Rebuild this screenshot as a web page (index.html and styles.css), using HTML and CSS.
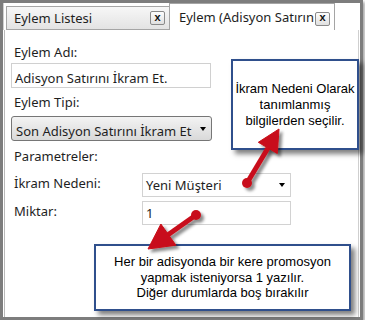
FILE: index.html
```html
<!DOCTYPE html>
<html>
<head>
<title>Eylem</title>
<meta charset="UTF-8">
<link rel="stylesheet" href="styles.css">
</head>
<body>

<div class="frame">
    <!-- sekmeler -->
    <div class="tabs">
        <div class="tab tab-idle">
            <span class="tab-title">Eylem Listesi</span>
            <span class="close">x</span>
        </div>
        <div class="tab tab-active">
            <span class="tab-title">Eylem (Adisyon Satırın</span>
            <span class="close">x</span>
        </div>
    </div>

    <!-- form -->
    <div class="panel">
        <div class="lbl lbl-name">Eylem Adı:</div>
        <div class="textbox">Adisyon Satırını İkram Et.</div>
        <div class="lbl lbl-type">Eylem Tipi:</div>
        <div class="combo">
            <span class="combo-text">Son Adisyon Satırını İkram Et</span>
            <span class="caret"></span>
        </div>
        <div class="lbl lbl-params">Parametreler:</div>
        <div class="row row-first">
            <div class="lbl row-lbl">İkram Nedeni:</div>
            <div class="pbox pcombo">
                <span>Yeni Müşteri</span>
                <span class="caret"></span>
            </div>
        </div>
        <div class="row row-second">
            <div class="lbl row-lbl">Miktar:</div>
            <div class="pbox">1</div>
        </div>
    </div>

    <!-- açıklama kutuları -->
    <div class="callout callout-top">İkram Nedeni Olarak<br>tanımlanmış<br>bilgilerden seçilir.</div>
    <div class="callout callout-bottom">Her bir adisyonda bir kere promosyon<br>yapmak isteniyorsa 1 yazılır.<br>Diğer durumlarda boş bırakılır</div>

    <!-- oklar -->
    <svg class="arrows" width="365" height="323" viewBox="0 0 365 323">
        <defs>
            <filter id="shade" x="-20%" y="-20%" width="160%" height="160%">
                <feDropShadow dx="3" dy="3" stdDeviation="1.5" flood-color="#000" flood-opacity="0.45"/>
            </filter>
        </defs>
        <g fill="#c8101a" stroke="#c8101a" filter="url(#shade)">
            <line x1="247" y1="183" x2="268" y2="148" stroke-width="5"/>
            <polygon points="279,129 277.3,153.5 258.3,142.3" stroke-width="1"/>
            <circle cx="247" cy="183" r="5" stroke="none"/>
        </g>
        <g fill="#c8101a" stroke="#c8101a" filter="url(#shade)">
            <line x1="196" y1="215" x2="167" y2="235.5" stroke-width="5"/>
            <polygon points="148,249 175.9,245.2 160.9,224" stroke-width="1"/>
            <circle cx="196" cy="215" r="5" stroke="none"/>
        </g>
    </svg>
</div>

</body>
</html>
```

FILE: styles.css
```css
body {
    margin: 0;
    background: #fff;
    font-family: "Noto Sans", sans-serif;
    font-size: 13px;
    color: #1e1e1e;
}

/* dış çerçeve */
.frame {
    position: relative;
    width: 363px;
    height: 320px;
    box-sizing: border-box;
    border: 3px solid #7d7d7d;
    box-shadow: 2px 2px 3px rgba(0, 0, 0, 0.35);
    background: #fff;
    display: flex;
    flex-direction: column;
}

/* sekmeler */
.tabs {
    display: flex;
    align-items: flex-end;
    height: 27px;
    padding-left: 3px;
    border-left: 1px solid #cfcfcf;
}

.tab {
    box-sizing: border-box;
    display: flex;
    align-items: center;
    border: 1px solid #a5a5a5;
    border-bottom: 0;
    line-height: 16px;
}

.tab-idle {
    width: 163px;
    height: 24px;
    padding: 0 4px 0 7px;
    margin-left: -1px;
    background: linear-gradient(#f7f7f7, #e3e3e3);
    border-bottom: 1px solid #a5a5a5;
    border-right: 0;
}

.tab-active {
    width: 166px;
    height: 27px;
    padding: 0 4px 0 9px;
    background: #fff;
}

.tab-title {
    flex: 1;
    white-space: nowrap;
}

.close {
    box-sizing: border-box;
    width: 15px;
    height: 14px;
    border: 1px solid #8a8a8a;
    border-radius: 2px;
    background: linear-gradient(#fdfdfd, #e0e0e0);
    font-family: "Liberation Mono", monospace;
    font-weight: bold;
    font-size: 11px;
    line-height: 11px;
    display: flex;
    align-items: center;
    justify-content: center;
    color: #111;
}

.tab-active .close {
    margin-top: 3px;
}

/* içerik */
.panel {
    flex: 1;
    margin: 0 1px 0 1px;
    border-left: 1px solid #b9b9b9;
    border-right: 1px solid #cfcfcf;
    padding-left: 6px;
}

.lbl {
    padding-left: 3px;
    line-height: 16px;
}

.lbl-name {
    margin-top: 14px;
}

.lbl-type {
    margin-top: 6px;
}

.lbl-params {
    margin-top: 7px;
}

.textbox {
    box-sizing: border-box;
    width: 200px;
    height: 25px;
    margin-top: 3px;
    padding: 6px 3px 0;
    border: 1px solid #d0d0d0;
    line-height: 16px;
}

.combo {
    box-sizing: border-box;
    width: 201px;
    height: 25px;
    margin-top: 6px;
    padding: 0 5px 0 4px;
    border: 1px solid #767676;
    border-radius: 3px;
    background: linear-gradient(#f3f3f3, #e6e6e6 50%, #d9d9d9);
    display: flex;
    justify-content: space-between;
    line-height: 16px;
}

.combo-text {
    padding-top: 6px;
    white-space: nowrap;
}

.caret {
    align-self: center;
    width: 0;
    height: 0;
    border-left: 3.5px solid transparent;
    border-right: 3.5px solid transparent;
    border-top: 4px solid #000;
}

.row {
    display: flex;
}

.row-first {
    margin-top: 9px;
}

.row-second {
    margin-top: 4px;
}

.row-lbl {
    width: 128px;
    padding-top: 2px;
}

.pbox {
    box-sizing: border-box;
    width: 149px;
    height: 24px;
    padding: 3px 3px 0;
    border: 1px solid #d2d2d2;
    line-height: 16px;
}

.pcombo {
    display: flex;
    justify-content: space-between;
    padding-right: 5px;
}

.pcombo .caret {
    margin-top: -3px;
}

/* açıklama kutuları */
.callout {
    position: absolute;
    box-sizing: border-box;
    border: 2px solid #2f4f8c;
    background: #fff;
    box-shadow: 4px 4px 5px rgba(0, 0, 0, 0.5);
    display: flex;
    align-items: center;
    justify-content: center;
    text-align: center;
    font-family: "Liberation Sans", Arial, sans-serif;
    font-size: 13px;
    line-height: 16px;
    color: #000;
}

.callout-top {
    left: 228px;
    top: 56px;
    width: 128px;
    height: 91px;
}

.callout-bottom {
    left: 91px;
    top: 241px;
    width: 257px;
    height: 67px;
    line-height: 15.5px;
}

/* oklar */
.arrows {
    position: absolute;
    left: -3px;
    top: -3px;
    pointer-events: none;
}
```
